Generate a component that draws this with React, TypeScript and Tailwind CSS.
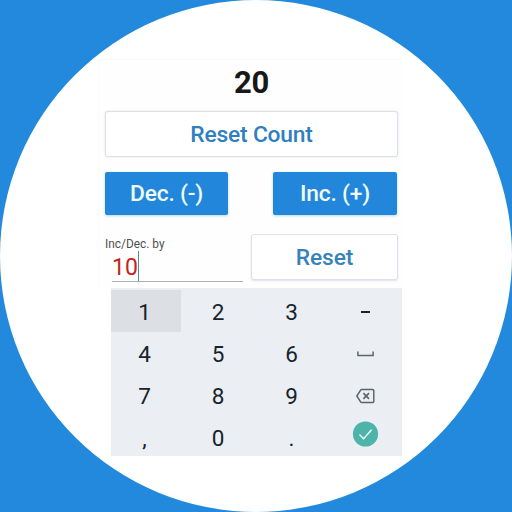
import React from "react";

function Digit({ children }: { children: React.ReactNode }) {
  return <span className="translate-y-px">{children}</span>;
}

function Key({ children, className = "" }: { children: React.ReactNode; className?: string }) {
  return <div className={`flex items-center justify-center ${className}`}>{children}</div>;
}

function Keypad() {
  return (
    <div className="ml-[13px] grid h-[168px] w-[291px] grid-cols-[70px_74px_73px_74px] grid-rows-[42px_42px_42px_42px] overflow-hidden bg-[#ebeef2] pt-[2px] text-[22.5px] leading-none text-[#17242b]">
      <Key className="bg-[#dcdfe3] pr-[3px]"><Digit>1</Digit></Key>
      <Key><Digit>2</Digit></Key>
      <Key><Digit>3</Digit></Key>
      <Key>
        <span className="mt-[2px] h-[2px] w-[9px] bg-[#17242b]" />
      </Key>
      <Key className="pr-[3px]"><Digit>4</Digit></Key>
      <Key><Digit>5</Digit></Key>
      <Key><Digit>6</Digit></Key>
      <Key>
        <svg className="mt-[1px] translate-x-[0.5px]" width="18" height="6" viewBox="0 0 18 6" fill="none" stroke="#5a666c" strokeWidth="1.5">
          <path d="M1.4 .6v3.8h15.2V.6" />
        </svg>
      </Key>
      <Key className="pr-[3px]"><Digit>7</Digit></Key>
      <Key><Digit>8</Digit></Key>
      <Key><Digit>9</Digit></Key>
      <Key>
        <svg className="mt-[2px] translate-x-[0.5px]" width="20" height="16" viewBox="0 0 20 16" fill="none" stroke="#5a666c" strokeWidth="1.5">
          <path d="M6.2 1.5H17a1.3 1.3 0 0 1 1.3 1.3v10.4a1.3 1.3 0 0 1-1.3 1.3H6.2a1.3 1.3 0 0 1-1.1-.6L1.3 8l3.8-5.9a1.3 1.3 0 0 1 1.1-.6Z" />
          <path d="m7.9 5.2 5.6 5.6m0-5.6-5.6 5.6" strokeWidth="1.7" />
        </svg>
      </Key>
      <Key className="pr-[3px]"><Digit>,</Digit></Key>
      <Key><Digit>0</Digit></Key>
      <Key><Digit>.</Digit></Key>
      <Key className="pb-[7px]">
        <svg className="translate-x-[0.5px]" width="26" height="26" viewBox="0 0 26 26" fill="none">
          <circle cx="13" cy="13" r="12.6" fill="#4db4aa" />
          <path d="m7 13.6 4.1 4.1 8-9" stroke="#f4fffc" strokeWidth="1.4" />
        </svg>
      </Key>
    </div>
  );
}

export default function App() {
  return (
    <div className="h-[512px] w-[512px] overflow-hidden bg-[#2289dc] font-['Roboto',sans-serif]">
      <div className="h-[512px] w-[512px] rounded-full bg-white pl-[98px] pt-[59px]">
        <div className="h-[229px] w-[304px] border-l border-t border-[#fafafa] bg-[#fefefe] pl-[6px]">
          <div className="flex h-[51px] w-[293px] items-center justify-center pb-[6px] text-[31px] font-bold leading-none tracking-[-0.4px] text-[#181818]">
            20
          </div>
          <button className="flex h-[46px] w-[293px] items-center justify-center rounded-[3px] border border-[#dce0e8] bg-white pt-[3px] text-[22.8px] font-medium leading-none tracking-[-0.2px] text-[#2e80c0] shadow-[0_0_2px_#d5dbe5]">
            Reset Count
          </button>
          <div className="mt-[15px] flex h-[43px] w-[292px] justify-between text-[22.8px] font-medium leading-none tracking-[-0.2px] text-[#effcf9]">
            <button className="flex w-[123px] items-center justify-center rounded-[2px] bg-[#2287db] pt-[2px] shadow-[0_1px_3px_#b8d6ed]">
              Dec. (-)
            </button>
            <button className="flex w-[124px] items-center justify-center rounded-[2px] bg-[#2287db] pt-[2px] shadow-[0_1px_3px_#b8d6ed]">
              Inc. (+)
            </button>
          </div>
          <div className="mt-[19px] flex w-[293px] justify-between">
            <label className="flex w-[139px] flex-col pt-[3px]">
              <span className="whitespace-nowrap text-[11.9px] leading-[14px] text-[#505050]">Inc/Dec. by</span>
              <span className="ml-[7px] flex h-[31px] w-[131px] border-b border-[#a9b3b5]">
                <span className="pt-[5px] text-[23px] leading-none text-[#c42420]">10</span>
                <span className="h-[30px] w-px bg-[#5c8c88]" />
              </span>
            </label>
            <button className="flex h-[46px] w-[147px] items-center justify-center rounded-[3px] border border-[#dee1e7] bg-white pt-[2px] text-[22.8px] font-medium leading-none tracking-[-0.1px] text-[#3882bc] shadow-[0_1px_2px_#dfe2e8]">
              Reset
            </button>
          </div>
        </div>
        <Keypad />
      </div>
    </div>
  );
}
